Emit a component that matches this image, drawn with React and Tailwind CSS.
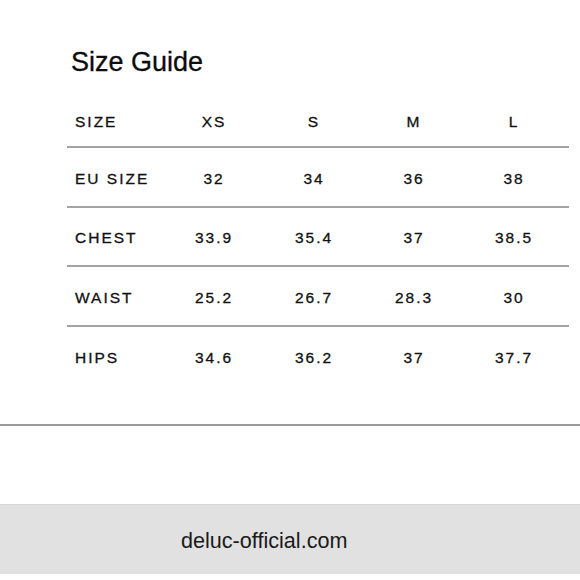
const columns = ["XS", "S", "M", "L"];

const rows = [
  { label: "EU SIZE", values: ["32", "34", "36", "38"] },
  { label: "CHEST", values: ["33.9", "35.4", "37", "38.5"] },
  { label: "WAIST", values: ["25.2", "26.7", "28.3", "30"] },
  { label: "HIPS", values: ["34.6", "36.2", "37", "37.7"] },
];

function Row({ label, values, last, head }) {
  return (
    <div
      className={
        "flex items-center pt-[3px] " +
        (head ? "h-[54px] " : "h-[59.5px] ") +
        (last ? "" : "border-b-2 border-[#a3a3a3]")
      }
    >
      <div className="w-[96px] pl-[8px]">{label}</div>
      {values.map((v, i) => (
        <div key={i} className="w-[100px] text-center pl-[2px]">
          {v}
        </div>
      ))}
    </div>
  );
}

export default function App() {
  return (
    <div
      className="w-[580px] h-[580px] bg-white flex flex-col text-[#111]"
      style={{ fontFamily: '"Liberation Sans", Arial, sans-serif' }}
    >
      <div className="pl-[71px] pt-[45px] h-[94px]">
        <h1 className="text-[27px] leading-[34px] text-[#0d0d0d] [-webkit-text-stroke:0.3px_#0d0d0d]">
          Size Guide
        </h1>
      </div>

      {/* ================= TABLE ================= */}
      <div className="ml-[67px] w-[502px] text-[15.5px] tracking-[2px] [-webkit-text-stroke:0.3px_#111]">
        <Row label="SIZE" values={columns} head />
        {rows.map((r, i) => (
          <Row key={r.label} {...r} last={i === rows.length - 1} />
        ))}
      </div>

      <div className="mt-[38px] border-t-2 border-[#9a9a9a]" />

      {/* ================= FOOTER ================= */}
      <div className="mt-[78px] h-[70px] bg-[#e1e1e1] border-t border-[#d6d6d6] flex items-center pl-[181px] pt-[3px]">
        <span className="text-[21.6px] text-[#1a1a1a]">deluc-official.com</span>
      </div>
    </div>
  );
}
